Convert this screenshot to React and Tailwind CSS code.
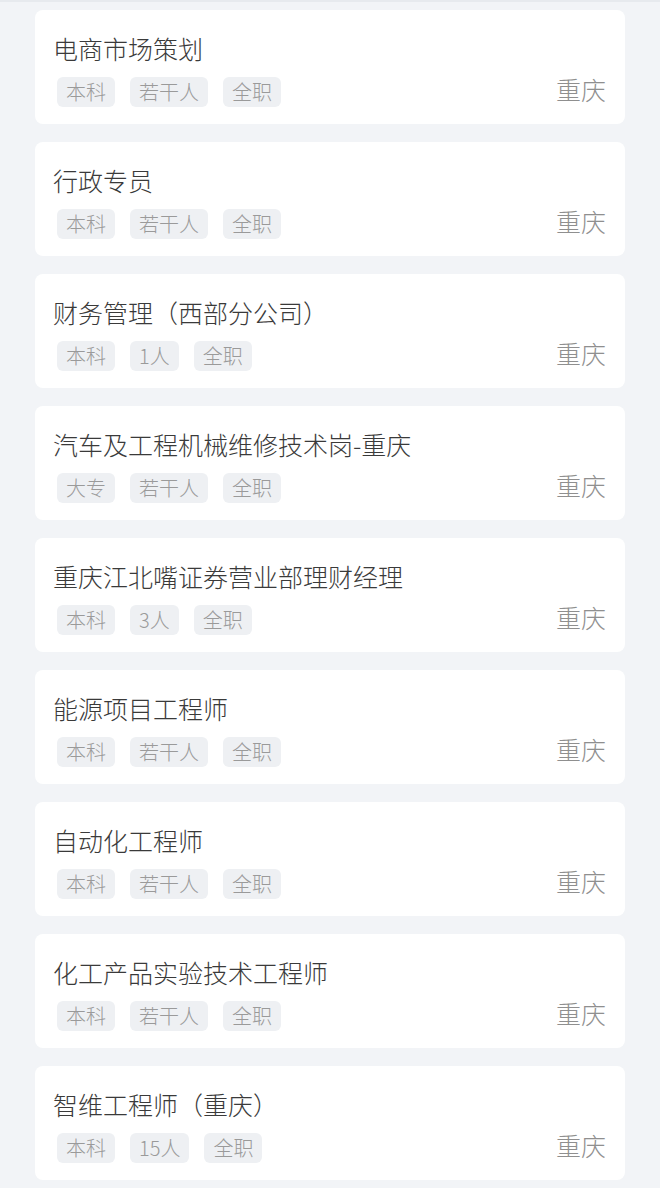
import React from "react";

const jobs = [
  { title: "电商市场策划", edu: "本科", count: "若干人", type: "全职" },
  { title: "行政专员", edu: "本科", count: "若干人", type: "全职" },
  { title: "财务管理（西部分公司）", edu: "本科", count: "1人", type: "全职" },
  { title: "汽车及工程机械维修技术岗-重庆", edu: "大专", count: "若干人", type: "全职" },
  { title: "重庆江北嘴证券营业部理财经理", edu: "本科", count: "3人", type: "全职" },
  { title: "能源项目工程师", edu: "本科", count: "若干人", type: "全职" },
  { title: "自动化工程师", edu: "本科", count: "若干人", type: "全职" },
  { title: "化工产品实验技术工程师", edu: "本科", count: "若干人", type: "全职" },
  { title: "智维工程师（重庆）", edu: "本科", count: "15人", type: "全职" },
];

function Tag({ children }) {
  return (
    <span className="h-[30px] px-[9px] rounded-[6px] bg-[#eef0f3] text-[#9a9a9a] text-[20px] font-light leading-[30px]">
      {children}
    </span>
  );
}

export default function App() {
  return (
    <div
      className="min-h-[1188px] bg-[#f2f4f7] border-t-[2px] border-[#e7eaee] pt-[8px] px-[35px] flex flex-col gap-[18px]"
      style={{ fontFamily: '"Noto Sans CJK SC", "Noto Sans", sans-serif' }}
    >
      {jobs.map((job) => (
        <div
          key={job.title}
          className="bg-white rounded-[8px] pt-[20px] pb-[17px] pl-[18px] pr-[19px]"
        >
          <div className="text-[25px] leading-9 font-light text-[#3a3a3a]">{job.title}</div>
          <div className="mt-[11px] flex items-center justify-between">
            <div className="ml-[4px] flex gap-[15px]">
              <Tag>{job.edu}</Tag>
              <Tag>{job.count}</Tag>
              <Tag>{job.type}</Tag>
            </div>
            <span className="text-[25px] leading-[30px] font-light text-[#8f8f8f] -mt-[7px]">重庆</span>
          </div>
        </div>
      ))}
    </div>
  );
}
